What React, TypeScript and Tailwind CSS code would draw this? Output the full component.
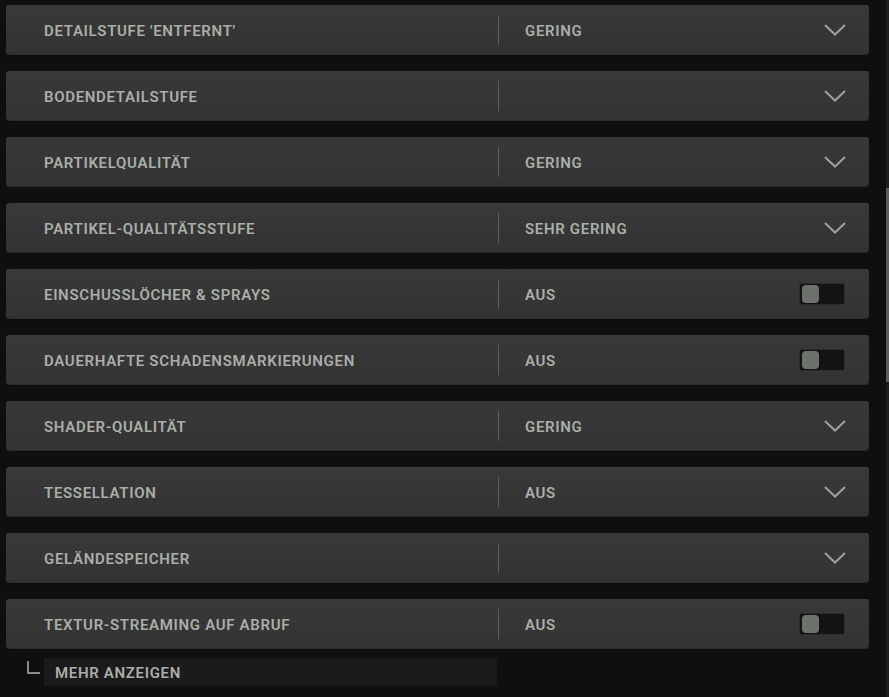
import { ReactNode } from 'react';

type Setting = {
  label: string;
  value: string;
  kind: 'select' | 'toggle';
};

const settings: Setting[] = [
  { label: "DETAILSTUFE 'ENTFERNT'", value: 'GERING', kind: 'select' },
  { label: 'BODENDETAILSTUFE', value: '', kind: 'select' },
  { label: 'PARTIKELQUALITÄT', value: 'GERING', kind: 'select' },
  { label: 'PARTIKEL-QUALITÄTSSTUFE', value: 'SEHR GERING', kind: 'select' },
  { label: 'EINSCHUSSLÖCHER & SPRAYS', value: 'AUS', kind: 'toggle' },
  { label: 'DAUERHAFTE SCHADENSMARKIERUNGEN', value: 'AUS', kind: 'toggle' },
  { label: 'SHADER-QUALITÄT', value: 'GERING', kind: 'select' },
  { label: 'TESSELLATION', value: 'AUS', kind: 'select' },
  { label: 'GELÄNDESPEICHER', value: '', kind: 'select' },
  { label: 'TEXTUR-STREAMING AUF ABRUF', value: 'AUS', kind: 'toggle' },
];

function Chevron() {
  return (
    <svg width="22" height="12" viewBox="0 0 22 12" className="mr-[23px] mt-[1px]">
      <path d="M1 1 L11 10.5 L21 1" fill="none" stroke="#9ba29b" strokeWidth="2" />
    </svg>
  );
}

function Toggle() {
  return (
    <div className="mr-[24px] flex h-[22px] w-[46px] items-center rounded-[2px] border border-[#2c2c2c] bg-[#131313] pl-[2px]">
      <div className="h-[18px] w-[17px] rounded-[4px] bg-[#6c716c]" />
    </div>
  );
}

function Row({ setting }: { setting: Setting }) {
  let control: ReactNode = setting.kind === 'select' ? <Chevron /> : <Toggle />;
  return (
    <div className="flex h-[49px] w-[863px] items-center rounded-[3px] bg-gradient-to-b from-[#393939] to-[#333333] shadow-[0_1px_0_#2a2a2a]">
      <div className="w-[492px] pl-[38px] pt-[3px] text-[#a9afa7]">{setting.label}</div>
      <div className="h-[30px] w-px bg-[#5a5d5a]" />
      <div className="flex-1 pl-[26px] pt-[3px] text-[#a9afa7]">{setting.value}</div>
      {control}
    </div>
  );
}

export default function App() {
  return (
    <div
      className="flex h-[697px] w-[889px] overflow-hidden bg-[#0f0f0f] text-[15px] font-semibold tracking-[0.045em]"
      style={{ fontFamily: '"Roboto", "Liberation Sans", sans-serif' }}
    >
      <div className="flex-1 pl-[6px] pt-[5px]">
        <div className="flex flex-col gap-[17px]">
          {settings.map((s) => (
            <Row key={s.label} setting={s} />
          ))}
        </div>
        {/* show more */}
        <div className="mt-[10px] flex items-start">
          <div className="ml-[21px] mt-[3px] h-[13px] w-[13px] border-b-2 border-l-2 border-[#8a8d8a]" />
          <div className="ml-[4px] flex h-[28px] w-[453px] items-center rounded-[2px] bg-[#1b1b1b] pl-[11px] pt-[2px] text-[#a9afa7]">
            MEHR ANZEIGEN
          </div>
        </div>
      </div>
      {/* scrollbar */}
      <div className="w-[3px] bg-[#1c1c1c]">
        <div className="mt-[188px] h-[194px] w-full bg-[#5c5c5c]" />
      </div>
    </div>
  );
}
